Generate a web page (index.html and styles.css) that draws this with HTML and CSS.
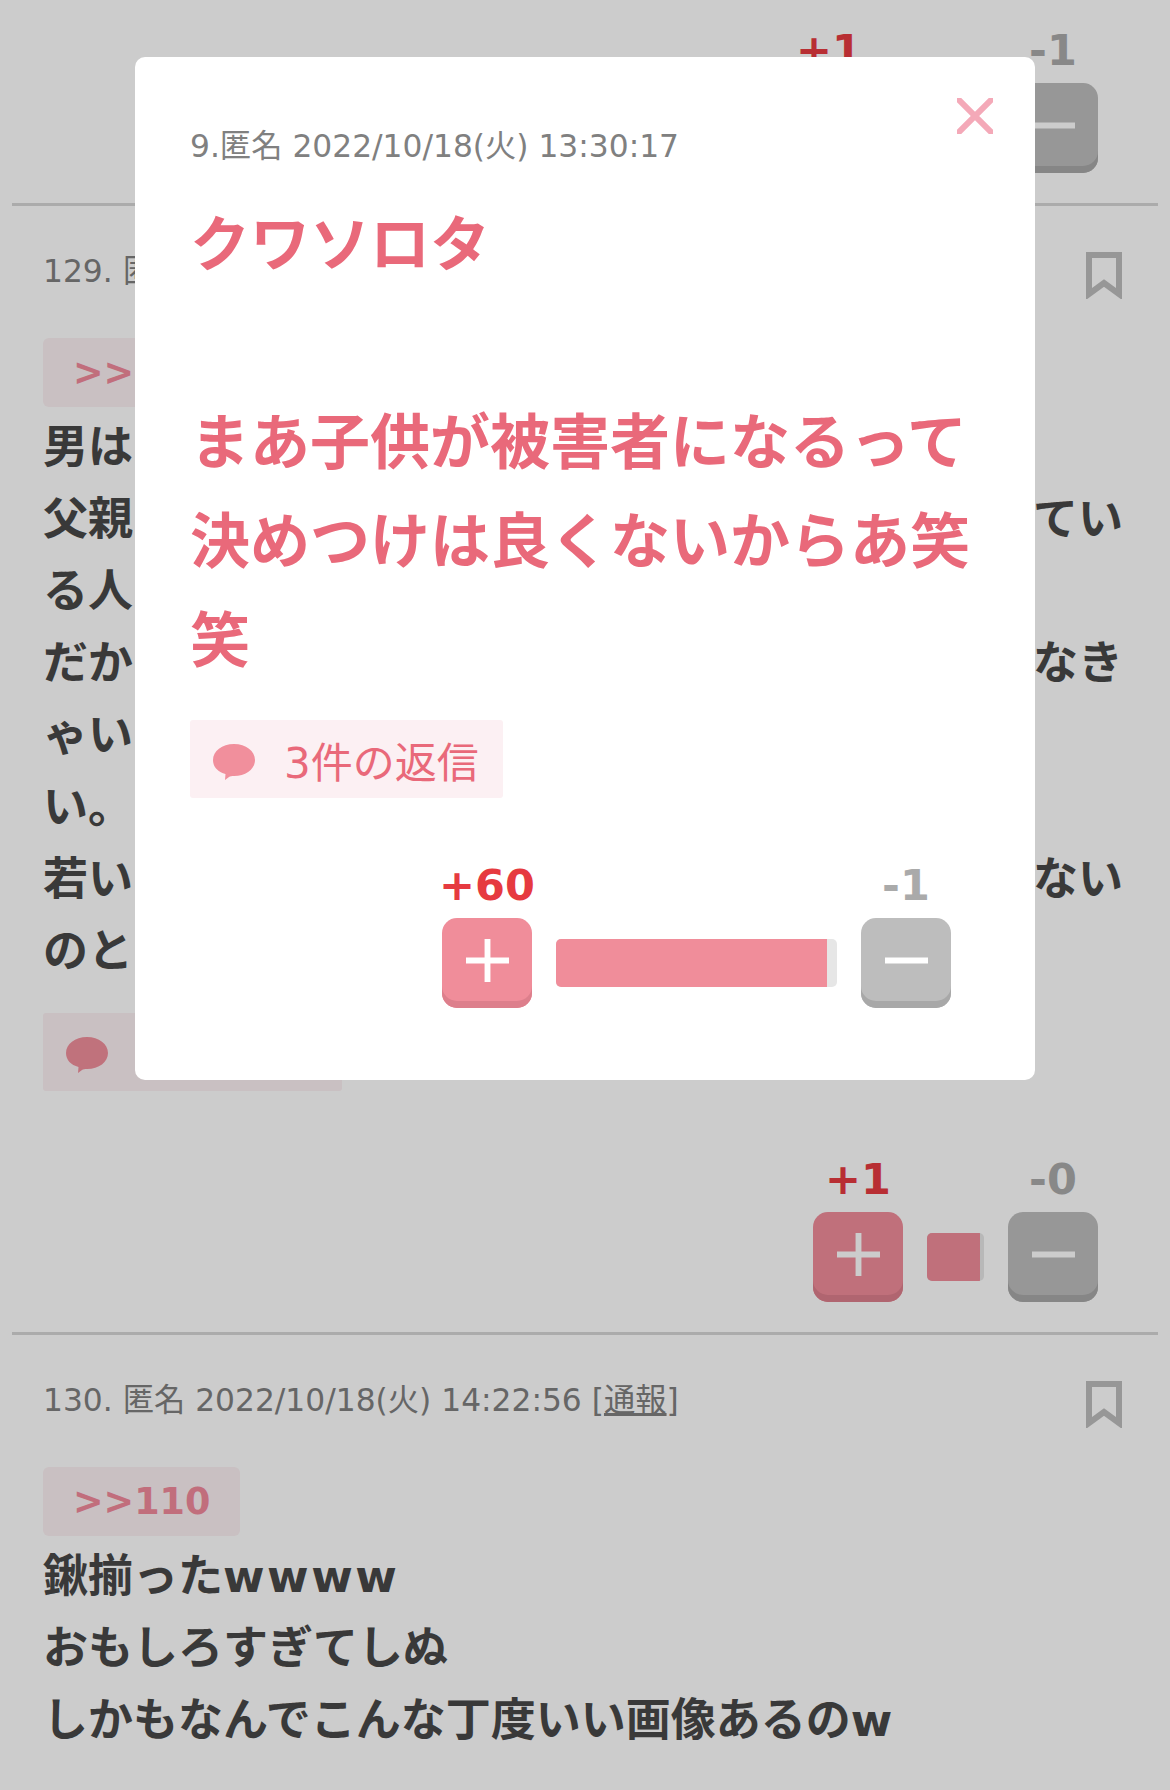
FILE: index.html
```html
<!DOCTYPE html>
<html lang="ja">
<head>
<meta charset="utf-8">
<title>コメント</title>
<link rel="stylesheet" href="styles.css">
</head>
<body>
<main class="page">
  <div class="vote vote-first">
    <div class="vote-col"><span class="count count-plus">+1</span><button class="btn btn-plus"><svg class="glyph" viewBox="0 0 44 44"><path d="M22 0V44M0 22H44"/></svg></button></div>
    <div class="bar" style="width:86px"><div class="fill" style="width:50%"></div></div>
    <div class="vote-col"><span class="count count-minus">-1</span><button class="btn btn-minus"><svg class="glyph" viewBox="0 0 44 44"><path d="M0 22H44"/></svg></button></div>
  </div>

  <article class="comment">
    <header class="comment-head">
      <p class="meta">129. 匿名</p>
      <svg class="bookmark" viewBox="0 0 36 47"><path d="M3 3H33V42L18 31L3 42Z"/></svg>
    </header>
    <a class="tag">&gt;&gt;</a>
    <p class="body">男は<br>父親　　　　　　　　　　　　　　　　　　　　てい<br>る人<br>だか　　　　　　　　　　　　　　　　　　　　なき<br>ゃい　　　　　　　　　　　　　　　　　　　な<br>い。<br>若い　　　　　　　　　　　　　　　　　　　　ない<br>のと</p>
    <a class="replies replies-one"><svg class="bubble" viewBox="0 0 42 36"><path d="M21 0C33 0 42 7 42 16C42 25 33 32 21 32C19 32 17 32 16 33L12 36L12.5 30C5 28 0 23 0 16C0 7 9 0 21 0Z"/></svg><span>1件の返信</span></a>
    <div class="vote">
      <div class="vote-col"><span class="count count-plus">+1</span><button class="btn btn-plus"><svg class="glyph" viewBox="0 0 44 44"><path d="M22 0V44M0 22H44"/></svg></button></div>
      <div class="bar" style="width:57px"><div class="fill" style="width:93%"></div></div>
      <div class="vote-col"><span class="count count-minus">-0</span><button class="btn btn-minus"><svg class="glyph" viewBox="0 0 44 44"><path d="M0 22H44"/></svg></button></div>
    </div>
  </article>

  <article class="comment">
    <header class="comment-head">
      <p class="meta">130. 匿名 2022/10/18(火) 14:22:56 [<a class="report">通報</a>]</p>
      <svg class="bookmark" viewBox="0 0 36 47"><path d="M3 3H33V42L18 31L3 42Z"/></svg>
    </header>
    <a class="tag">&gt;&gt;110</a>
    <p class="body">鍬揃った<span class="wide">wwww</span><br>おもしろすぎてしぬ<br>しかもなんでこんな丁度いい画像あるのw</p>
  </article>
</main>

<div class="overlay">
  <section class="modal">
    <button class="close"><svg viewBox="0 0 36 36"><path d="M2 2L34 34M34 2L2 34"/></svg></button>
    <p class="meta modal-meta">9.匿名 2022/10/18(火) 13:30:17</p>
    <p class="modal-text">クワソロタ<br><br>まあ子供が被害者になるって決めつけは良くないからあ笑笑</p>
    <a class="replies"><svg class="bubble" viewBox="0 0 42 36"><path d="M21 0C33 0 42 7 42 16C42 25 33 32 21 32C19 32 17 32 16 33L12 36L12.5 30C5 28 0 23 0 16C0 7 9 0 21 0Z"/></svg><span>3件の返信</span></a>
    <div class="vote">
      <div class="vote-col"><span class="count count-plus">+60</span><button class="btn btn-plus"><svg class="glyph" viewBox="0 0 44 44"><path d="M22 0V44M0 22H44"/></svg></button></div>
      <div class="bar" style="width:281px"><div class="fill" style="width:96.4%"></div></div>
      <div class="vote-col"><span class="count count-minus">-1</span><button class="btn btn-minus"><svg class="glyph" viewBox="0 0 44 44"><path d="M0 22H44"/></svg></button></div>
    </div>
  </section>
</div>
</body>
</html>
```
FILE: styles.css
```css
* { box-sizing: border-box; }
html, body { margin: 0; padding: 0; height: 1790px; overflow: hidden; background: #fff; }
body {
  position: relative;
  font-family: "DejaVu Sans", "Noto Sans CJK JP", sans-serif;
  color: #484848;
}
p { margin: 0; }
.page { padding: 25px 43px 0; }

.comment { position: relative; }
.comment::before {
  content: "";
  display: block;
  height: 3px;
  margin: 0 -31px;
  background: #d6d6d6;
}

.comment-head {
  display: flex;
  justify-content: space-between;
  align-items: flex-start;
  height: 48px;
  margin-top: 46px;
}
.meta { font-size: 31.3px; line-height: 38px; color: #808080; white-space: nowrap; }
.report { text-decoration: underline; }
.bookmark { width: 36px; height: 47px; margin-right: 5px; flex: none; }
.bookmark path { fill: none; stroke: #bdbdbd; stroke-width: 6; }

.tag {
  display: block;
  width: 197px;
  height: 69px;
  margin-top: 38px;
  padding-left: 30px;
  border-radius: 6px;
  background: #fcf0f3;
  color: #f28a9b;
  font-size: 36.5px;
  font-weight: 700;
  line-height: 69px;
  white-space: nowrap;
}

.body {
  margin-top: 5px;
  font-size: 45px;
  font-weight: 700;
  line-height: 72px;
  white-space: nowrap;
}
.wide { letter-spacing: 2.5px; }

.replies {
  display: flex;
  align-items: center;
  width: 313px;
  height: 78px;
  margin-top: 25px;
  padding-left: 23px;
  border-radius: 3px;
  background: #fcf0f3;
  color: #e9697a;
  font-size: 42px;
}
.replies-one { width: 299px; }
.bubble { width: 42px; height: 36px; margin: 5px 29px 0 0; flex: none; }
.bubble path { fill: #f18f9c; }

.vote {
  display: flex;
  justify-content: flex-end;
  align-items: flex-end;
  gap: 24px;
  margin: 63px 29px 30px 0;
}
.vote-first { margin-top: 0; }
.vote-col { display: flex; flex-direction: column; align-items: center; width: 90px; }
.count {
  display: block;
  height: 48px;
  margin-bottom: 10px;
  font-size: 43px;
  font-weight: 700;
  line-height: 50px;
  white-space: nowrap;
}
.count-plus { color: #e63a40; }
.count-minus { color: #aaa; }

.btn {
  display: flex;
  align-items: center;
  justify-content: center;
  width: 90px;
  height: 90px;
  padding: 0 0 6px;
  border: 0;
  border-radius: 15px;
}
.btn-plus { background: #f08d9a; box-shadow: inset 0 -7px 0 #dd7f8c; }
.btn-minus { background: #bdbdbd; box-shadow: inset 0 -7px 0 #a8a8a8; }
.glyph { width: 43px; height: 43px; }
.glyph path { fill: none; stroke: #fff; stroke-width: 6; }

.bar {
  flex: none;
  height: 48px;
  margin-bottom: 21px;
  overflow: hidden;
  border-radius: 5px;
  background: #e6e6e6;
}
.fill { height: 100%; background: #f08d9a; }

.overlay {
  position: absolute;
  inset: 0;
  padding-top: 57px;
  background: rgba(0, 0, 0, 0.2);
}
.modal {
  position: relative;
  width: 900px;
  height: 1023px;
  margin-left: 135px;
  padding: 65px 55px 0;
  border-radius: 10px;
  background: #fff;
}
.modal-meta { line-height: 48px; }
.modal-text {
  margin: 26px 0 29px;
  color: #e9697a;
  font-size: 60px;
  font-weight: 700;
  line-height: 99px;
}
.modal .replies { margin-top: 0; }
.modal .vote { margin-top: 62px; margin-bottom: 0; }
.close {
  position: absolute;
  top: 41px;
  right: 42px;
  width: 36px;
  height: 36px;
  padding: 0;
  border: 0;
  background: none;
}
.close svg { display: block; width: 36px; height: 36px; }
.close path { fill: none; stroke: #f4a9b8; stroke-width: 6; stroke-linecap: round; }
```
